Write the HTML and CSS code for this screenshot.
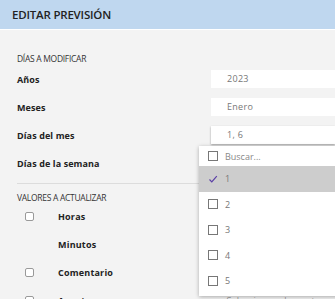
FILE: index.html
```html
<!DOCTYPE html>
<html>
<head>
    <title>Editar previsión</title>
    <link rel="stylesheet" href="styles.css">
</head>
<body>
    <div class="header">
        <h1>EDITAR PREVISIÓN</h1>
    </div>
    <div class="content">
        <h2 class="section-title first">DÍAS A MODIFICAR</h2>
        <div class="form-row">
            <label>Años</label>
            <div class="field">2023</div>
        </div>
        <div class="form-row">
            <label>Meses</label>
            <div class="field">Enero</div>
        </div>
        <div class="form-row">
            <label>Días del mes</label>
            <div class="field-wrap">
                <div class="field focused">1, 6</div>
                <div class="dropdown">
                    <div class="option search"><span class="box"></span><span class="muted">Buscar...</span></div>
                    <div class="option selected">
                        <svg class="check" width="10" height="10" viewBox="0 0 10 10"><path d="M1.5 5.5 L3.8 7.8 L8.8 2.2" fill="none" stroke="#5a3ea6" stroke-width="1.2"/></svg>
                        <span>1</span>
                    </div>
                    <div class="option"><span class="box"></span><span>2</span></div>
                    <div class="option"><span class="box"></span><span>3</span></div>
                    <div class="option"><span class="box"></span><span>4</span></div>
                    <div class="option"><span class="box"></span><span>5</span></div>
                </div>
            </div>
        </div>
        <div class="form-row">
            <label>Días de la semana</label>
            <div class="field empty"></div>
        </div>

        <hr class="divider">

        <h2 class="section-title second">VALORES A ACTUALIZAR</h2>
        <div class="value-row">
            <span class="check-box"></span>
            <label>Horas</label>
        </div>
        <div class="value-row">
            <span class="no-box"></span>
            <label>Minutos</label>
        </div>
        <div class="value-row">
            <span class="check-box"></span>
            <label>Comentario</label>
        </div>
        <div class="value-row">
            <span class="check-box"></span>
            <label>Asunto</label>
            <span class="placeholder">Seleccionar elementos</span>
        </div>
    </div>
</body>
</html>
```

FILE: styles.css
```css
body {
    margin: 0;
    background: #f3f3f3;
    font-family: "Open Sans", Arial, sans-serif;
    color: #222;
    overflow: hidden;
}
.header {
    height: 29px;
    background: #bfd7ef;
    border-bottom: 1px solid #ffffff;
    display: flex;
    align-items: center;
    padding-left: 12px;
}
.header h1 {
    margin: 0;
    font-size: 11.5px;
    font-weight: 600;
    color: #222;
    letter-spacing: -0.2px;
}
.content {
    padding-left: 17px;
}
.section-title {
    margin: 0;
    font-size: 8.5px;
    font-weight: 400;
    line-height: 12px;
    color: #333;
    letter-spacing: -0.3px;
}
.section-title.first {
    padding-top: 23px;
}
.section-title.second {
    margin-bottom: -2px;
}
.form-row {
    display: grid;
    grid-template-columns: 194px 1fr;
    align-items: center;
    height: 28px;
}
.form-row label {
    font-size: 9px;
    font-weight: 700;
    letter-spacing: 0.1px;
}
.field-wrap {
    position: relative;
}
.field {
    height: 18px;
    background: #fff;
    font-size: 9px;
    color: #777;
    line-height: 18px;
    padding-left: 16px;
    letter-spacing: 0.3px;
}
.field.focused {
    box-shadow: 0 1px 2px rgba(0, 0, 0, 0.35);
}
.field.empty {
    background: transparent;
}
.dropdown {
    position: absolute;
    left: -12px;
    top: 20px;
    width: 160px;
    background: #fff;
    box-shadow: 0 1px 4px rgba(0, 0, 0, 0.3);
    z-index: 5;
    padding-bottom: 2px;
}
.option {
    display: flex;
    align-items: center;
    height: 25.5px;
    padding-left: 9px;
    font-size: 9px;
    color: #777;
}
.option.search {
    height: 20px;
}
.option.selected {
    background: #cdcdcd;
}
.box {
    width: 8px;
    height: 8px;
    border: 1px solid #777;
    margin-right: 7px;
}
.check {
    margin-right: 7px;
}
.muted {
    color: #888;
}
.divider {
    border: none;
    border-top: 1px solid #dcdcdc;
    margin: 6px 0 8px 0;
    width: 183px;
}
.value-row {
    display: flex;
    align-items: center;
    height: 28px;
    font-size: 9px;
    font-weight: 700;
    letter-spacing: 0.2px;
}
.check-box, .no-box {
    width: 7px;
    height: 7px;
    margin-left: 8px;
    margin-right: 24px;
}
.check-box {
    border: 1px solid #999;
    border-radius: 2px;
    background: #fff;
}
.no-box {
    border: 1px solid transparent;
}
.placeholder {
    margin-left: auto;
    margin-right: 10px;
    font-weight: 400;
    color: #999;
}
```
